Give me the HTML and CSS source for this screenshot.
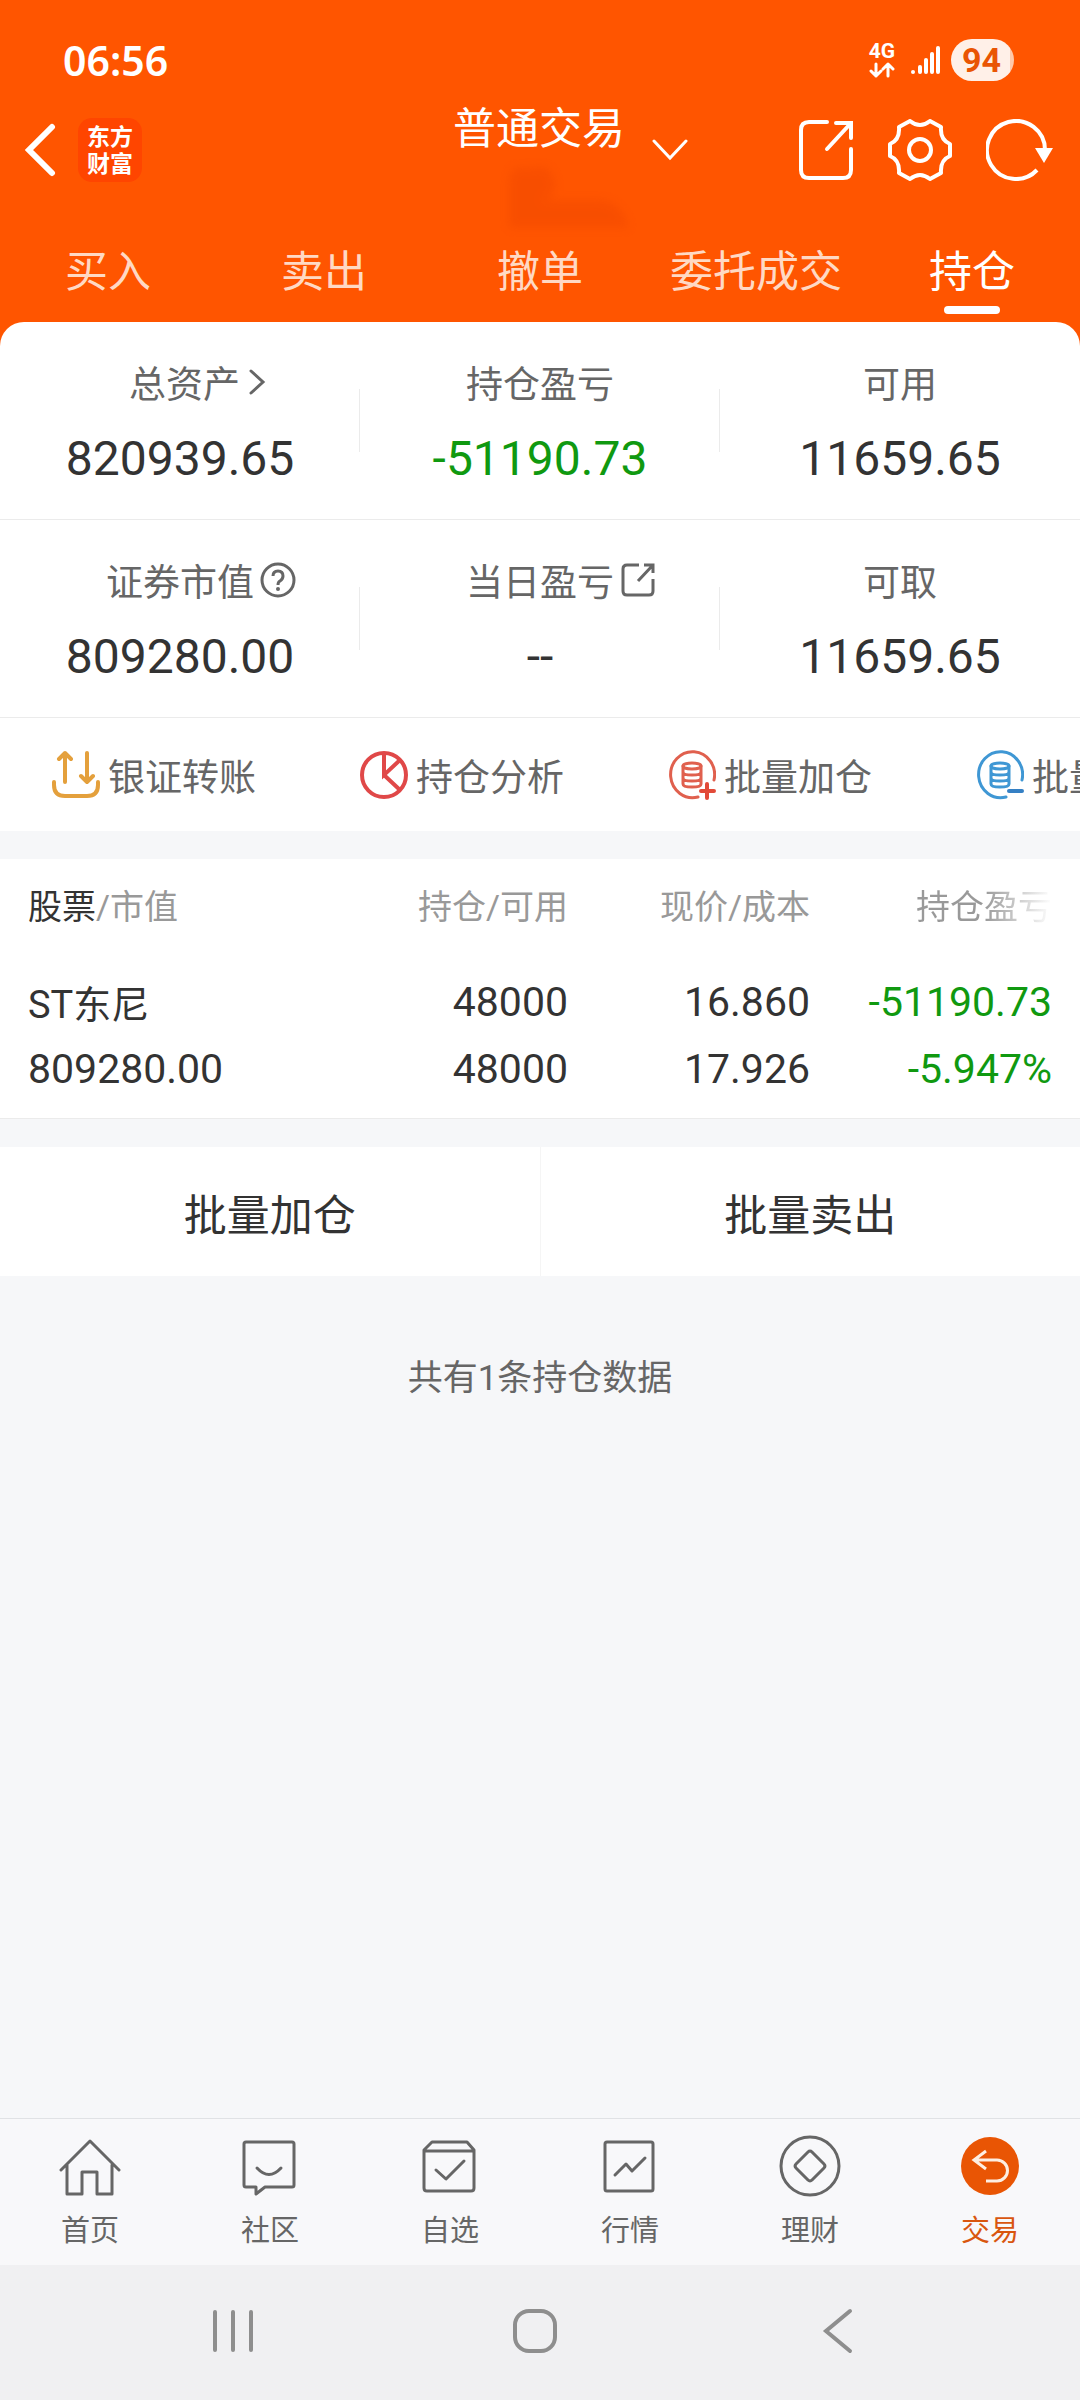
FILE: index.html
```html
<!DOCTYPE html>
<html lang="zh-CN">
<head>
<meta charset="utf-8">
<meta name="viewport" content="width=device-width, initial-scale=1">
<title>普通交易 - 持仓</title>
<link rel="stylesheet" href="styles.css">
</head>
<body>
<header class="header">
  <div class="status">
    <span class="status-time">06:56</span>
    <div class="status-side">
      <div class="network">
        <span class="network-type">4G</span>
        <svg width="26" height="16" viewBox="0 0 26 16" fill="none" stroke="currentColor" stroke-width="3" stroke-linecap="round" stroke-linejoin="round"><path d="M7 2v12M2 9l5 5 5-5M19 14V2M14 7l5-5 5 5"/></svg>
      </div>
      <svg class="signal" width="30" height="30" viewBox="0 0 30 30" fill="currentColor"><circle cx="2" cy="27" r="2"/><rect x="7" y="20" width="4" height="9" rx="2"/><rect x="13" y="13" width="4" height="16" rx="2"/><rect x="19" y="7" width="4" height="22" rx="2"/><rect x="25" y="1" width="4" height="28" rx="2"/></svg>
      <span class="battery">94</span>
    </div>
  </div>

  <div class="topbar">
    <div class="topbar-left">
      <button class="icon-button" type="button" aria-label="返回">
        <svg width="32" height="54" viewBox="0 0 32 54" fill="none" stroke="currentColor" stroke-width="6" stroke-linecap="round" stroke-linejoin="miter"><path d="M28 4 5 27l23 23"/></svg>
      </button>
      <span class="logo">东方<br>财富</span>
    </div>
    <button class="account" type="button">
      <span>普通交易</span>
      <svg class="account-arrow" width="36" height="22" viewBox="0 0 36 22" fill="none" stroke="currentColor" stroke-width="3" stroke-linecap="round"><path d="M2 2l16 17L34 2"/></svg>
      <svg class="account-mask" width="140" height="84" viewBox="0 0 140 84"><path d="M12 10h22q16-6 20 16 0 14-14 16h58q22 0 30 28H8V22z"/></svg>
    </button>
    <div class="topbar-right">
      <button class="icon-button" type="button" aria-label="分享">
        <svg width="56" height="62" viewBox="0 0 56 62" fill="none" stroke="currentColor" stroke-width="4" stroke-linecap="round"><path d="M29 3H11q-8 0-8 8v40q0 8 8 8h34q8 0 8-8V30"/><path d="M38 4h15v15"/><path d="M53 4 29 30"/></svg>
      </button>
      <button class="icon-button" type="button" aria-label="设置">
        <svg width="64" height="62" viewBox="0 0 64 62" fill="none" stroke="currentColor" stroke-width="4" stroke-linejoin="round"><path d="M22 2q10 8 20 0l11 6q-1 13 9 17v12q-10 4-9 17l-11 6q-10-8-20 0l-11-6q1-13-9-17V25q10-4 9-17z"/><circle cx="32" cy="31" r="11"/></svg>
      </button>
      <button class="icon-button" type="button" aria-label="刷新">
        <svg width="68" height="62" viewBox="0 0 68 62" fill="none" stroke="currentColor" stroke-width="4"><path d="M51 51A29 29 0 1 1 59 31"/><path d="M49 29h18l-9 15z" fill="currentColor" stroke="none"/></svg>
      </button>
    </div>
  </div>

  <nav class="tabs">
    <a class="tab" href="#">买入</a>
    <a class="tab" href="#">卖出</a>
    <a class="tab" href="#">撤单</a>
    <a class="tab" href="#">委托成交</a>
    <a class="tab tab-active" href="#">持仓</a>
  </nav>
</header>

<main class="main">
  <section class="assets">
    <div class="asset-row">
      <div class="asset">
        <a class="asset-label" href="#">总资产<svg class="asset-chevron" width="18" height="28" viewBox="0 0 18 28" fill="none" stroke="currentColor" stroke-width="3" stroke-linecap="round"><path d="M3 3l12 11L3 25"/></svg></a>
        <span class="asset-value">820939.65</span>
      </div>
      <div class="asset">
        <span class="asset-label">持仓盈亏</span>
        <span class="asset-value down">-51190.73</span>
      </div>
      <div class="asset">
        <span class="asset-label">可用</span>
        <span class="asset-value">11659.65</span>
      </div>
    </div>
    <div class="asset-row">
      <div class="asset">
        <a class="asset-label" href="#">证券市值<svg class="asset-icon" width="36" height="36" viewBox="0 0 36 36" fill="none" stroke="currentColor" stroke-width="3"><circle cx="18" cy="18" r="16"/><path d="M13 14q0-5 5-5t5 5q0 3-3 5-2 1-2 4"/><circle cx="18" cy="27" r="2" fill="currentColor" stroke="none"/></svg></a>
        <span class="asset-value">809280.00</span>
      </div>
      <div class="asset">
        <a class="asset-label" href="#">当日盈亏<svg class="asset-icon" width="36" height="36" viewBox="0 0 36 36" fill="none" stroke="currentColor" stroke-width="3"><path d="M19 3H7q-4 0-4 4v22q0 4 4 4h22q4 0 4-4V17"/><path d="M24 3h9v8M33 3 18 19"/></svg></a>
        <span class="asset-value">--</span>
      </div>
      <div class="asset">
        <span class="asset-label">可取</span>
        <span class="asset-value">11659.65</span>
      </div>
    </div>
    <div class="actions">
      <a class="action" href="#">
        <svg width="48" height="50" viewBox="0 0 48 50" fill="none" stroke="#e4a03c" stroke-width="4" stroke-linecap="round" stroke-linejoin="round"><path d="M13 32V3M7 9l6-6 6 6M35 3v29M29 26l6 6 6-6"/><path d="M2 32v3q0 11 11 11h22q11 0 11-11v-3"/></svg>
        银证转账</a>
      <a class="action" href="#">
        <svg width="48" height="50" viewBox="0 0 48 50" fill="none" stroke="#e04848" stroke-width="4"><circle cx="24" cy="25" r="22"/><path d="M24 3v22l16-15M24 25l16 15"/></svg>
        持仓分析</a>
      <a class="action" href="#">
        <svg width="48" height="50" viewBox="0 0 48 50" fill="none" stroke="#e0604e" stroke-width="3" stroke-linecap="round"><path d="M46 30A22 23 0 1 0 30 47"/><ellipse cx="24" cy="16" rx="9" ry="3"/><path d="M15 16v18q0 3 9 3t9-3V16M15 22q0 3 9 3t9-3M15 28q0 3 9 3t9-3"/><path stroke="#e24a38" stroke-width="4" d="M33 41h13M39 34v14"/></svg>
        批量加仓</a>
      <a class="action" href="#">
        <svg width="48" height="50" viewBox="0 0 48 50" fill="none" stroke="#3f97d4" stroke-width="3" stroke-linecap="round"><path d="M46 30A22 23 0 1 0 30 47"/><ellipse cx="24" cy="16" rx="9" ry="3"/><path d="M15 16v18q0 3 9 3t9-3V16M15 22q0 3 9 3t9-3M15 28q0 3 9 3t9-3"/><path stroke="#3580c4" stroke-width="4" d="M33 41h13"/></svg>
        批量卖出</a>
    </div>
  </section>

  <section class="holdings">
    <table class="table">
      <colgroup><col><col class="col-count"><col class="col-price"><col class="col-profit"></colgroup>
      <thead>
        <tr>
          <th scope="col"><span class="sorted">股票</span>/市值</th>
          <th scope="col">持仓/可用</th>
          <th scope="col">现价/成本</th>
          <th scope="col"><span class="fade">持仓盈亏</span></th>
        </tr>
      </thead>
      <tbody>
        <tr>
          <td><span class="line stock">ST东尼</span><span class="line">809280.00</span></td>
          <td><span class="line">48000</span><span class="line">48000</span></td>
          <td><span class="line">16.860</span><span class="line">17.926</span></td>
          <td class="down"><span class="line">-51190.73</span><span class="line">-5.947%</span></td>
        </tr>
      </tbody>
    </table>
  </section>

  <section class="batch">
    <button class="batch-button" type="button">批量加仓</button>
    <button class="batch-button" type="button">批量卖出</button>
  </section>

  <p class="summary">共有1条持仓数据</p>
</main>

<nav class="bottom-nav">
  <a class="nav-item" href="#">
    <svg width="62" height="62" viewBox="0 0 62 62" fill="none" stroke="currentColor" stroke-width="3" stroke-linecap="round" stroke-linejoin="round"><path d="M2 35 31 6l29 29M8 30v29h15V37h15v22h15V30"/></svg>
    首页</a>
  <a class="nav-item" href="#">
    <svg width="62" height="62" viewBox="0 0 62 62" fill="none" stroke="currentColor" stroke-width="3" stroke-linecap="round" stroke-linejoin="round"><path d="M7 7h46q2 0 2 2v41q0 2-2 2H26l-9 7v-7H7q-2 0-2-2V9q0-2 2-2z"/><path d="M18 33q12 13 24 0"/></svg>
    社区</a>
  <a class="nav-item" href="#">
    <svg width="62" height="62" viewBox="0 0 62 62" fill="none" stroke="currentColor" stroke-width="3" stroke-linecap="round" stroke-linejoin="round"><path d="M13 7h35l7 8v38q0 3-3 3H8q-3 0-3-3V15zM5 16h50"/><path d="M17 35l10 9 18-18"/></svg>
    自选</a>
  <a class="nav-item" href="#">
    <svg width="62" height="62" viewBox="0 0 62 62" fill="none" stroke="currentColor" stroke-width="3" stroke-linecap="round" stroke-linejoin="round"><rect x="6" y="7" width="48" height="49" rx="2"/><path d="M16 40l11-11 6 7 13-13"/></svg>
    行情</a>
  <a class="nav-item" href="#">
    <svg width="62" height="62" viewBox="0 0 62 62" fill="none" stroke="currentColor" stroke-width="3" stroke-linejoin="round"><circle cx="31" cy="31" r="29"/><path d="M29 17q2-2 4 0l12 12q2 2 0 4L33 45q-2 2-4 0L17 33q-2-2 0-4z"/></svg>
    理财</a>
  <a class="nav-item nav-active" href="#">
    <svg width="62" height="62" viewBox="0 0 62 62" fill="none"><circle cx="31" cy="31" r="29" fill="#e95504"/><path d="M27 16 15 25l12 9M15 25h23a10 10 0 0 1 0 21H27" stroke="#fdeee2" stroke-width="3"/></svg>
    交易</a>
</nav>

<div class="system-bar">
  <button class="system-button" type="button" aria-label="最近任务">
    <svg width="46" height="46" viewBox="0 0 46 46" fill="none" stroke="currentColor" stroke-width="4" stroke-linecap="round"><path d="M5 4v38M23 4v38M41 4v38"/></svg>
  </button>
  <button class="system-button" type="button" aria-label="主屏幕">
    <svg width="46" height="46" viewBox="0 0 46 46" fill="none" stroke="currentColor" stroke-width="4"><rect x="3" y="3" width="40" height="40" rx="14"/></svg>
  </button>
  <button class="system-button" type="button" aria-label="返回">
    <svg width="46" height="46" viewBox="0 0 46 46" fill="none" stroke="currentColor" stroke-width="4" stroke-linecap="round"><path d="M35 3 11 23l24 20"/></svg>
  </button>
</div>
</body>
</html>
```

FILE: styles.css
```css
* {
  box-sizing: border-box;
}

body {
  margin: 0;
  min-height: 100vh;
  display: flex;
  flex-direction: column;
  background: #f6f7f9;
  color: #333;
  font-family: Roboto, "Noto Sans CJK SC", sans-serif;
  overflow-x: hidden;
}

a {
  color: inherit;
  text-decoration: none;
}

button {
  margin: 0;
  padding: 0;
  border: 0;
  background: none;
  color: inherit;
  font: inherit;
}

svg {
  display: block;
  flex: none;
}

.down {
  color: #109910;
}

/* Header */

.header {
  padding: 20px 0 24px;
  background: #ff5500;
  color: #fff;
}

.status {
  height: 80px;
  padding: 0 66px 0 63px;
  display: flex;
  align-items: center;
  justify-content: space-between;
}

.status-time {
  font: 600 41px/48px "Noto Sans", sans-serif;
}

.status-side {
  display: flex;
  align-items: center;
}

.network {
  display: flex;
  flex-direction: column;
  align-items: center;
  gap: 2px;
  margin-right: 16px;
}

.network-type {
  font-size: 21px;
  line-height: 18px;
  font-weight: 700;
}

.signal {
  margin-right: 10px;
}

.battery {
  width: 63px;
  height: 42px;
  padding-right: 2px;
  border-radius: 21px;
  background: linear-gradient(90deg, #fff0e8 59px, #ffc8aa 59px);
  color: #e95504;
  font-size: 34px;
  line-height: 42px;
  font-weight: 700;
  text-align: center;
}

.topbar {
  height: 100px;
  padding: 0 26px 0 24px;
  display: grid;
  grid-template-columns: 1fr auto 1fr;
  align-items: center;
}

.topbar-left {
  display: flex;
  align-items: center;
  gap: 22px;
}

.topbar-right {
  display: flex;
  align-items: center;
  justify-content: flex-end;
  gap: 34px;
}

.logo {
  width: 64px;
  height: 64px;
  padding: 6px 0;
  border-radius: 14px;
  background: #ff4500;
  font-size: 23px;
  line-height: 27px;
  font-weight: 700;
  text-align: center;
}

.account {
  position: relative;
  align-self: start;
  font-size: 43px;
  line-height: 58px;
}

.account-arrow {
  position: absolute;
  left: 100%;
  top: 39px;
  margin-left: 27px;
}

.account-mask {
  position: absolute;
  left: 48px;
  top: 58px;
  fill: #e84000;
  opacity: 0.3;
  filter: blur(5px);
}

.tabs {
  display: flex;
}

.tab {
  flex: 1;
  padding: 42px 0 8px;
  display: flex;
  flex-direction: column;
  align-items: center;
  gap: 4px;
  color: #ffd9c4;
  font-size: 43px;
  line-height: 60px;
}

.tab::after {
  content: "";
  width: 56px;
  height: 8px;
  border-radius: 4px;
}

.tab-active {
  color: #fff;
}

.tab-active::after {
  background: #fff;
}

/* Assets */

.main {
  flex: 1;
}

.assets {
  margin-top: -24px;
  border-radius: 24px 24px 0 0;
  background: #fff;
  position: relative;
}

.asset-row {
  display: flex;
  align-items: center;
  border-bottom: 1px solid #ebebeb;
}

.asset {
  position: relative;
  flex: 1;
  padding: 37px 0 30px;
  display: flex;
  flex-direction: column;
  align-items: center;
  gap: 16px;
}

.asset:not(:last-child)::after {
  content: "";
  position: absolute;
  right: 0;
  top: 67px;
  bottom: 67px;
  width: 1px;
  background: #ebebeb;
}

.asset-label {
  display: flex;
  align-items: center;
  color: #666;
  font-size: 37px;
  line-height: 54px;
}

.asset-value {
  font-size: 48px;
  line-height: 60px;
}

.asset-icon {
  margin: -8px -42px 0 6px;
}

.asset-chevron {
  margin: -8px -35px 0 8px;
}

.actions {
  display: flex;
  overflow: hidden;
}

.action {
  flex: none;
  width: 308px;
  height: 113px;
  display: flex;
  align-items: center;
  justify-content: center;
  gap: 8px;
  color: #666;
  font-size: 37px;
  white-space: nowrap;
}

/* Holdings */

.holdings {
  margin-top: 28px;
  background: #fff;
  border-bottom: 1px solid #ebebeb;
}

.table {
  width: 100%;
  border-collapse: collapse;
  table-layout: fixed;
}

.col-count,
.col-price {
  width: 242px;
}

.col-profit {
  width: 270px;
}

.table th {
  padding: 27px 0 41px;
  color: #999;
  font-size: 34px;
  line-height: 42px;
  font-weight: 400;
  text-align: right;
}

.table td {
  padding: 0 0 15px;
  font-size: 41px;
  line-height: 67px;
  text-align: right;
  vertical-align: top;
}

.table th:first-child,
.table td:first-child {
  padding-left: 28px;
  text-align: left;
}

.table th:last-child,
.table td:last-child {
  padding-right: 28px;
}

.sorted {
  color: #333;
}

.fade {
  background: linear-gradient(90deg, #999 50%, #fff);
  background-clip: text;
  color: transparent;
}

.line {
  display: block;
}

.stock {
  padding-top: 6px;
  font-size: 38px;
  line-height: 61px;
}

/* Batch actions */

.batch {
  margin-top: 28px;
  display: flex;
  background: #fff;
}

.batch-button {
  flex: 1;
  height: 129px;
  font-size: 43px;
}

.batch-button:first-child {
  border-right: 1px solid #f5f5f5;
}

.summary {
  margin: 76px 0;
  color: #666;
  font-size: 35px;
  line-height: 54px;
  text-align: center;
}

/* Bottom navigation */

.bottom-nav {
  display: flex;
  border-top: 1px solid #e0e2e5;
  background: #f8f8fa;
}

.nav-item {
  flex: 1;
  padding: 16px 0 14px;
  display: flex;
  flex-direction: column;
  align-items: center;
  gap: 14px;
  color: #666;
  font-size: 29px;
  line-height: 40px;
}

.nav-active {
  color: #d9560f;
}

.system-bar {
  height: 135px;
  padding: 0 91px 4px 82px;
  display: flex;
  background: #f0f0f2;
  color: #8e8e8e;
}

.system-button {
  flex: 1;
  display: flex;
  align-items: center;
  justify-content: center;
}
```
